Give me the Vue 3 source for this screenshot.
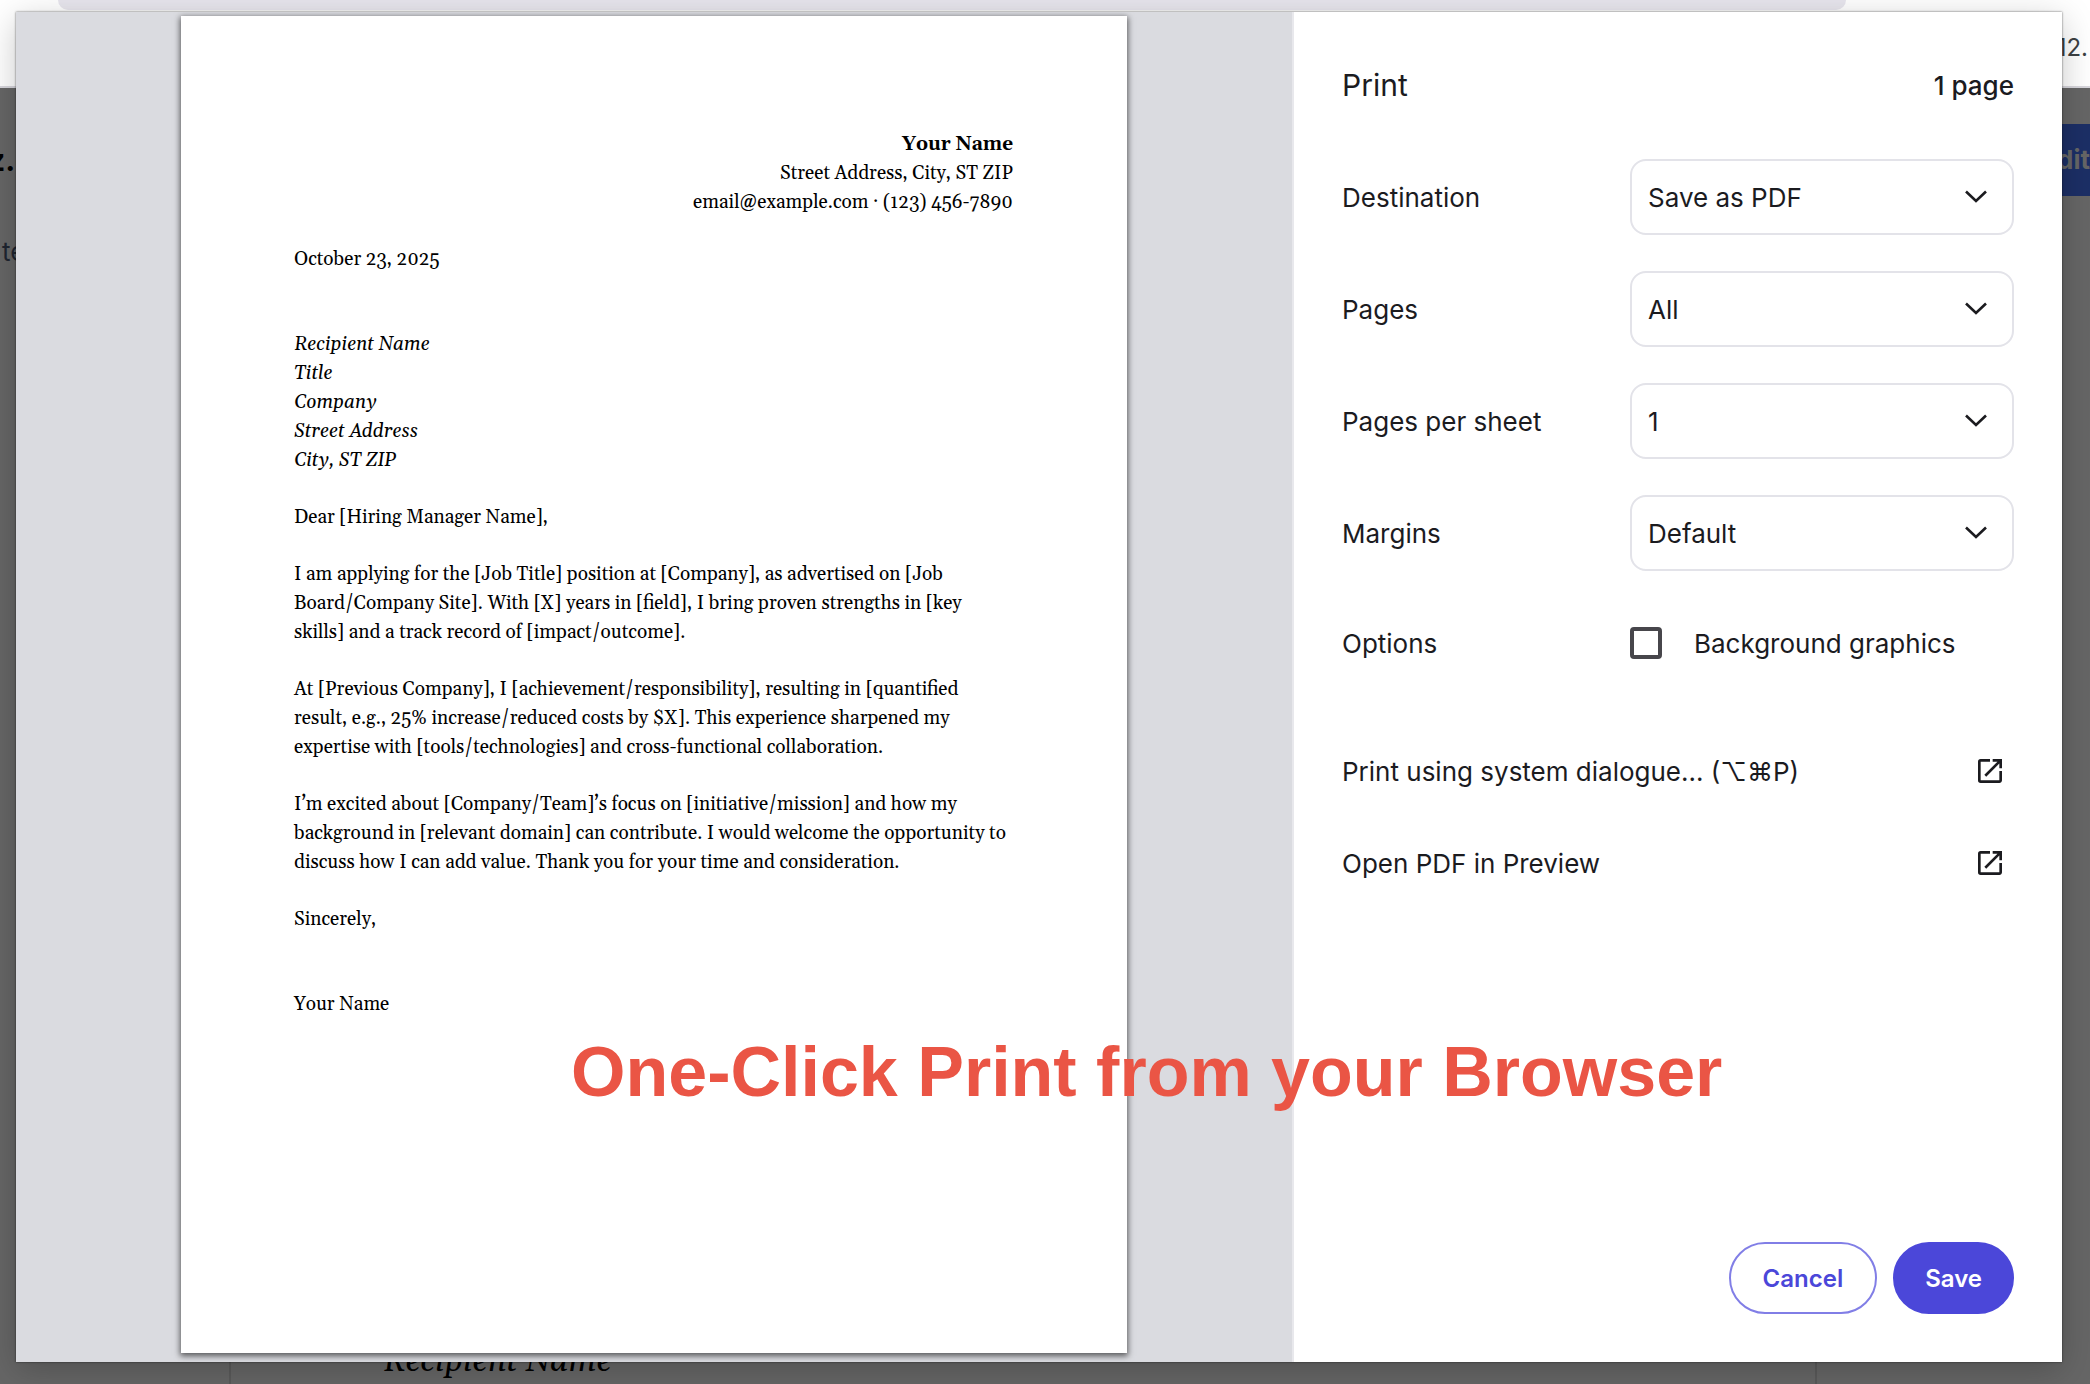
<script setup>
import { ref } from 'vue'

const fields = ref([
  { id: 'destination', label: 'Destination', value: 'Save as PDF' },
  { id: 'pages', label: 'Pages', value: 'All' },
  { id: 'per-sheet', label: 'Pages per sheet', value: '1' },
  { id: 'margins', label: 'Margins', value: 'Default' },
])
const backgroundGraphics = ref(false)
const links = ['Print using system dialogue... (⌥⌘P)', 'Open PDF in Preview']
const recipient = ['Recipient Name', 'Title', 'Company', 'Street Address', 'City, ST ZIP']
const paragraphs = [
  ['I am applying for the [Job Title] position at [Company], as advertised on [Job', 'Board/Company Site]. With [X] years in [field], I bring proven strengths in [key', 'skills] and a track record of [impact/outcome].'],
  ['At [Previous Company], I [achievement/responsibility], resulting in [quantified', 'result, e.g., 25% increase/reduced costs by $X]. This experience sharpened my', 'expertise with [tools/technologies] and cross-functional collaboration.'],
  ['I’m excited about [Company/Team]’s focus on [initiative/mission] and how my', 'background in [relevant domain] can contribute. I would welcome the opportunity to', 'discuss how I can add value. Thank you for your time and consideration.'],
]
</script>

<template>
  <div class="window">
    <div class="browser" aria-hidden="true">
      <div class="toolbar">
        <div class="address"></div>
        <div class="bookmarks">12.</div>
      </div>
      <div class="site">
        <div class="site-bar">
          <span class="brand">z.c</span>
          <span class="edit">dit</span>
        </div>
        <div class="tagline">te</div>
        <div class="sheet">Recipient Name</div>
      </div>
    </div>

    <div class="dialog" role="dialog" aria-labelledby="title">
      <main class="preview">
        <article class="page">
          <header class="sender">
            <strong>Your Name</strong>
            <span>Street Address, City, ST ZIP</span>
            <span>email@example.com · (123) 456-7890</span>
          </header>
          <p>October 23, 2025</p>
          <address class="spaced">
            <span v-for="line in recipient" :key="line">{{ line }}</span>
          </address>
          <p>Dear [Hiring Manager Name],</p>
          <p v-for="(lines, i) in paragraphs" :key="i">
            <span v-for="line in lines" :key="line">{{ line }}</span>
          </p>
          <p>Sincerely,</p>
          <p class="spaced">Your Name</p>
        </article>
      </main>

      <aside class="settings">
        <header class="heading">
          <h1 id="title">Print</h1>
          <span class="count">1 page</span>
        </header>

        <form class="fields" @submit.prevent>
          <div v-for="f in fields" :key="f.id" class="row">
            <label :for="f.id">{{ f.label }}</label>
            <div class="select">
              <select :id="f.id" v-model="f.value">
                <option>{{ f.value }}</option>
              </select>
              <svg width="24" height="16" viewBox="0 0 24 16"><path d="M2 2.500 12 12 22 2.500" fill="none" stroke="#1b1b1f" stroke-width="2.600" /></svg>
            </div>
          </div>
          <div class="row options">
            <span>Options</span>
            <label class="check">
              <input v-model="backgroundGraphics" type="checkbox" />
              Background graphics
            </label>
          </div>
        </form>

        <nav class="links">
          <a v-for="l in links" :key="l" href="#">
            {{ l }}
            <svg width="24" height="24" viewBox="3 3 18 18"><path fill="#1b1b1f" d="M19 19H5V5h7V3H5a2 2 0 0 0-2 2v14a2 2 0 0 0 2 2h14c1.1 0 2-.9 2-2v-7h-2v7zM14 3v2h3.590l-9.830 9.830 1.410 1.410L19 6.410V10h2V3h-7z" /></svg>
          </a>
        </nav>

        <footer class="actions">
          <button type="button" class="cancel">Cancel</button>
          <button type="button" class="save">Save</button>
        </footer>
      </aside>
    </div>

    <div class="banner">One-Click Print from your Browser</div>
  </div>
</template>

<style>
body {
  margin: 0;
}
</style>

<style scoped>
* {
  box-sizing: border-box;
}
.window {
  position: relative;
  min-height: 100vh;
  overflow: hidden;
  font-family: Inter, 'DejaVu Sans', sans-serif;
  font-size: 26px;
  color: #1b1b1f;
}
.browser {
  display: flex;
  flex-direction: column;
  height: 100vh;
}
.toolbar {
  height: 88px;
  background: #fff;
  border-bottom: 2px solid #d8d7dd;
}
.address {
  height: 10px;
  margin: 0 244px 0 58px;
  background: #e8e6ee;
  border-radius: 0 0 20px 20px;
}
.bookmarks {
  padding-right: 2px;
  margin-top: 20px;
  line-height: 36px;
  font-size: 24px;
  text-align: right;
  color: #3c4043;
}
.site {
  flex: 1;
  display: flex;
  flex-direction: column;
  background: #666;
}
.site-bar {
  display: flex;
  justify-content: space-between;
  align-items: center;
  height: 72px;
  margin-top: 36px;
  font-weight: 700;
}
.brand {
  margin-left: -12px;
  font-size: 30px;
  color: #000;
}
.edit {
  width: 60px;
  line-height: 72px;
  text-align: right;
  background: #1c2f66;
  color: #666;
}
.tagline {
  margin-top: 40px;
  padding-left: 2px;
  line-height: 32px;
  color: #1f2530;
}
.sheet {
  flex: 1;
  display: flex;
  align-items: flex-end;
  margin: 40px 273px 0 229px;
  padding: 0 152px 2px;
  border: solid #5a5a5a;
  border-width: 0 2px;
  font: italic 32px/40px Georgia, Gelasio, 'Liberation Serif', serif;
  color: #000;
}
.dialog {
  position: absolute;
  inset: 12px 28px 22px 16px;
  display: flex;
  background: #fff;
  box-shadow: 0 0 2px rgba(0, 0, 0, 0.6), 0 8px 32px rgba(0, 0, 0, 0.22);
}
.preview {
  flex: 1;
  overflow: hidden;
  padding: 4px 165px 9px;
  background: #dadbe0;
}
.page {
  height: 100%;
  padding: 114px 114px 0 113px;
  background: #fff;
  box-shadow: 0 2px 6px 1px rgba(0, 0, 0, 0.6);
  font-family: Georgia, Gelasio, 'Liberation Serif', serif;
  font-size: 19px;
  line-height: 29px;
  color: #000;
  white-space: nowrap;
}
.page span,
.page strong {
  display: block;
}
.page p,
.page address {
  margin: 28px 0 0;
}
.page .spaced {
  margin-top: 56px;
}
.sender {
  text-align: right;
}
.settings {
  display: flex;
  flex-direction: column;
  width: 770px;
  padding: 48px;
  border-left: 2px solid #e8e8ec;
}
.heading {
  display: flex;
  justify-content: space-between;
  align-items: center;
  height: 50px;
}
h1 {
  margin: 0;
  font-size: 30px;
  font-weight: 400;
}
.count {
  font-weight: 500;
}
.fields {
  display: flex;
  flex-direction: column;
  gap: 36px;
  margin-top: 49px;
}
.row {
  display: flex;
  align-items: center;
  justify-content: space-between;
}
.select {
  display: grid;
  align-items: center;
  width: 384px;
}
.select > * {
  grid-area: 1 / 1;
}
.select svg {
  justify-self: end;
  margin-right: 26px;
  pointer-events: none;
}
select {
  appearance: none;
  width: 100%;
  height: 76px;
  padding: 0 16px;
  border: 2px solid #e3e3e9;
  border-radius: 16px;
  background: #fff;
  font: inherit;
  color: inherit;
}
.options {
  height: 72px;
}
.check {
  display: flex;
  align-items: center;
  gap: 32px;
  width: 384px;
}
.check input {
  appearance: none;
  width: 32px;
  height: 32px;
  margin: 0;
  border: 4px solid #47464b;
  border-radius: 4px;
}
.links {
  display: flex;
  flex-direction: column;
  gap: 52px;
  margin-top: 72px;
}
.links a {
  display: flex;
  justify-content: space-between;
  align-items: center;
  height: 40px;
  padding-right: 12px;
  color: inherit;
  text-decoration: none;
}
.actions {
  display: flex;
  justify-content: flex-end;
  gap: 16px;
  margin-top: auto;
}
button {
  height: 72px;
  padding: 0 32px;
  border: 2px solid #4b47d9;
  border-radius: 36px;
  font: 600 24px Inter, sans-serif;
}
.cancel {
  border-color: #817ee6;
  background: #fff;
  color: #4b47d9;
}
.save {
  padding: 0 30px;
  background: #4b47d9;
  color: #fff;
}
.banner {
  position: absolute;
  top: 1032px;
  left: 571px;
  font: 700 70px/80px 'Liberation Sans', Arial, sans-serif;
  color: #ea5545;
  white-space: nowrap;
}
</style>
